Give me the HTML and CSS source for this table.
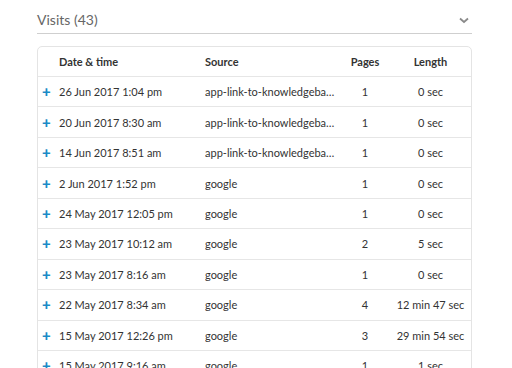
FILE: index.html
```html
<!DOCTYPE html>
<html lang="en">
<head>
  <meta charset="UTF-8">
  <title>Visits</title>
  <link rel="stylesheet" href="styles.css">
</head>
<body>
  <div class="panel">
    <div class="panel-header">
      <h2>Visits (43)</h2>
      <svg class="chevron" width="10" height="7" viewBox="0 0 10 7"><path d="M1 1.5 L5 5 L9 1.5" fill="none" stroke="#8a8a8a" stroke-width="1.8"/></svg>
    </div>

    <div class="visits">
      <div class="row head">
        <span></span>
        <span>Date &amp; time</span>
        <span>Source</span>
        <span class="num">Pages</span>
        <span class="num">Length</span>
      </div>
      <div class="row"><span class="plus">+</span><span>26 Jun 2017 1:04 pm</span><span class="src">app-link-to-knowledgebase</span><span class="num">1</span><span class="num">0 sec</span></div>
      <div class="row"><span class="plus">+</span><span>20 Jun 2017 8:30 am</span><span class="src">app-link-to-knowledgebase</span><span class="num">1</span><span class="num">0 sec</span></div>
      <div class="row"><span class="plus">+</span><span>14 Jun 2017 8:51 am</span><span class="src">app-link-to-knowledgebase</span><span class="num">1</span><span class="num">0 sec</span></div>
      <div class="row"><span class="plus">+</span><span>2 Jun 2017 1:52 pm</span><span class="src">google</span><span class="num">1</span><span class="num">0 sec</span></div>
      <div class="row"><span class="plus">+</span><span>24 May 2017 12:05 pm</span><span class="src">google</span><span class="num">1</span><span class="num">0 sec</span></div>
      <div class="row"><span class="plus">+</span><span>23 May 2017 10:12 am</span><span class="src">google</span><span class="num">2</span><span class="num">5 sec</span></div>
      <div class="row"><span class="plus">+</span><span>23 May 2017 8:16 am</span><span class="src">google</span><span class="num">1</span><span class="num">0 sec</span></div>
      <div class="row"><span class="plus">+</span><span>22 May 2017 8:34 am</span><span class="src">google</span><span class="num">4</span><span class="num">12 min 47 sec</span></div>
      <div class="row"><span class="plus">+</span><span>15 May 2017 12:26 pm</span><span class="src">google</span><span class="num">3</span><span class="num">29 min 54 sec</span></div>
      <div class="row"><span class="plus">+</span><span>15 May 2017 9:16 am</span><span class="src">google</span><span class="num">1</span><span class="num">1 sec</span></div>
    </div>
  </div>
</body>
</html>
```

FILE: styles.css
```css
* {
  box-sizing: border-box;
  margin: 0;
  padding: 0;
}

body {
  font-family: Lato, "Open Sans", sans-serif;
  background: #fff;
  color: #333;
  font-size: 11px;
  overflow: hidden;
}

.panel {
  margin: 0 40px 0 37px;
  padding-top: 9px;
}

.panel-header {
  display: flex;
  align-items: center;
  justify-content: space-between;
  height: 25px;
  border-bottom: 1px solid #cfcfcf;
  padding-right: 3px;
}

h2 {
  font-size: 14px;
  font-weight: 400;
  color: #666;
  margin-top: -4px;
}

.chevron {
  margin-top: -2px;
}

.visits {
  margin-top: 12px;
  border: 1px solid #e4e4e4;
  border-radius: 5px;
}

.row {
  display: grid;
  grid-template-columns: 21px 146px 135px 50px 81px;
  align-items: center;
  height: 30.45px;
  border-top: 1px solid #e6e6e6;
}

.row.head {
  border-top: none;
  height: 29px;
  font-weight: 700;
  color: #333;
}

.row span {
  white-space: nowrap;
}

.plus {
  color: #1b8ac6;
  font-weight: 900;
  font-size: 15px;
  padding-left: 4px;
  line-height: 1;
}

.src {
  overflow: hidden;
  text-overflow: ellipsis;
  padding-right: 4px;
}

.num {
  text-align: center;
}
```
